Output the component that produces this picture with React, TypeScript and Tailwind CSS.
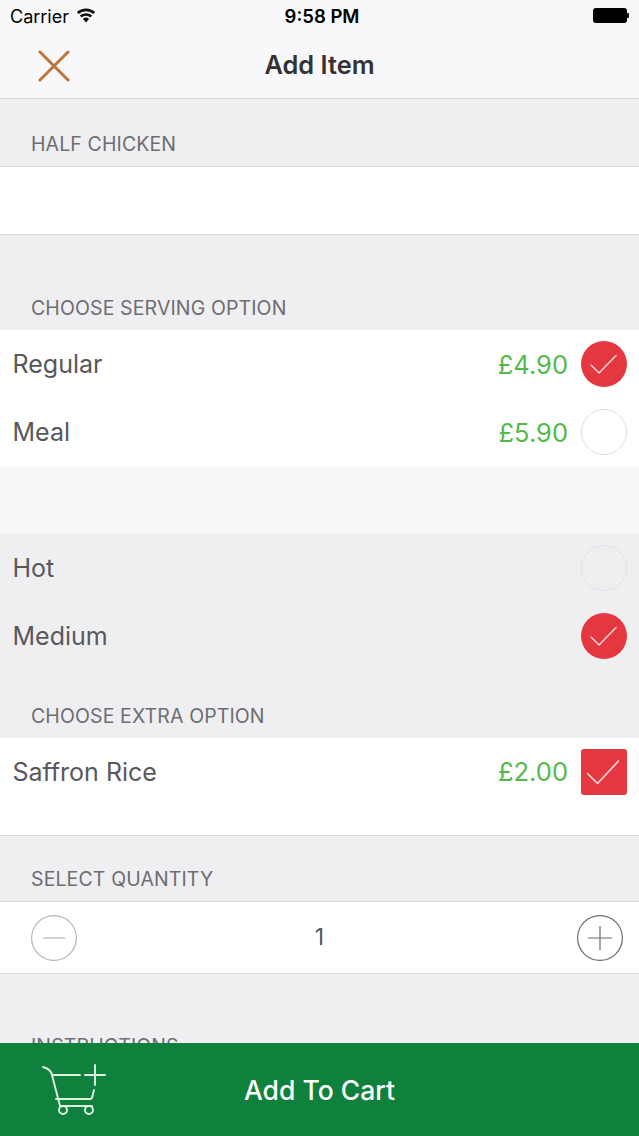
import type { ReactNode } from 'react';

function Check({ large }: { large?: boolean }) {
  return (
    <svg width="46" height="46" viewBox="0 0 46 46" fill="none" stroke="#fcdcdc" strokeWidth={large ? 1.6 : 1.4} strokeLinecap="round" strokeLinejoin="round">
      {large ? <path d="M6.500 24.500l10 10L37.500 12" /> : <path d="M10 24l8 8 17-17.500" />}
    </svg>
  );
}

function Radio({ on, dim }: { on?: boolean; dim?: boolean }) {
  if (on) {
    return (
      <div className="w-[46px] h-[46px] rounded-full bg-[#e5373f] shrink-0">
        <Check />
      </div>
    );
  }
  return <div className={`w-[46px] h-[46px] rounded-full border shrink-0 ${dim ? 'border-[#e2e2e6]' : 'border-[#dcdce0]'}`} />;
}

function Label({ children, className }: { children: ReactNode; className: string }) {
  return (
    <div className={`flex items-end pl-[31px] bg-[#efeff2] text-[#6d6d72] text-[19.5px] leading-[24px] tracking-[0.12px] ${className}`}>
      {children}
    </div>
  );
}

function Row({ name, price, control, dark }: { name: string; price?: string; control: ReactNode; dark?: boolean }) {
  return (
    <div className={`h-[68px] flex items-center pl-[12.5px] pr-[12px] ${dark ? 'bg-[#efeff2]' : 'bg-white'}`}>
      <span className="mt-[2px] text-[25px] text-[#58585c]">{name}</span>
      {price && <span className="ml-auto mt-[2px] text-[25.5px] text-[#55b94a]">{price}</span>}
      <div className={price ? 'ml-[13px]' : 'ml-auto'}>{control}</div>
    </div>
  );
}

export default function App() {
  return (
    <div className="w-[639px] h-[1136px] flex flex-col overflow-hidden bg-[#efeff2] font-['Inter',sans-serif]">
      <header className="h-[99px] shrink-0 bg-[#f8f7fa] border-b border-[#d6d6d9]">
        <div className="h-[33px] flex items-center relative px-[10px] text-black">
          <span className="text-[18px]">Carrier</span>
          <svg className="ml-[7px] mb-[2px]" width="20" height="15" viewBox="0 0 20 15" fill="#111">
            <path d="M10 14.500L6.900 10.900a4.600 4.600 0 0 1 6.200 0zM5.600 9.400L3.900 7.500a9.200 9.200 0 0 1 12.200 0l-1.700 1.900a6.700 6.700 0 0 0-8.800 0zM2.600 6L.8 4a13.800 13.800 0 0 1 18.400 0l-1.800 2a11.300 11.300 0 0 0-14.800 0z" />
          </svg>
          <span className="absolute left-0 right-0 pl-[5px] text-center text-[18.5px] font-semibold">9:58 PM</span>
          <div className="ml-auto mb-[2px] flex items-center">
            <div className="w-[34px] h-[15px] rounded-[3px] bg-black" />
            <div className="w-[2px] h-[5px] bg-[#222]" />
          </div>
        </div>
        <div className="h-[65px] flex items-center relative">
          <svg className="ml-[38px]" width="32" height="32" viewBox="0 0 32 32" stroke="#bd7339" strokeWidth="3" strokeLinecap="round">
            <path d="M2 2l28 28M30 2L2 30" />
          </svg>
          <span className="absolute left-0 right-0 text-center text-[25.4px] font-semibold text-[#333336]">Add Item</span>
        </div>
      </header>

      <main className="flex-1 min-h-0 overflow-hidden">
        <Label className="h-[68px] pb-[10px] border-b border-[#d9d9dc]">HALF CHICKEN</Label>
        <div className="h-[68px] bg-white border-b border-[#d9d9dc]" />
        <Label className="h-[95px] pb-[10px]">CHOOSE SERVING OPTION</Label>
        <Row name="Regular" price="£4.90" control={<Radio on />} />
        <Row name="Meal" price="£5.90" control={<Radio />} />
        <div className="h-[68px] bg-[#f7f7f9]" />
        <Row name="Hot" control={<Radio dim />} dark />
        <Row name="Medium" control={<Radio on />} dark />
        <Label className="h-[68px] pb-[10px]">CHOOSE EXTRA OPTION</Label>
        <div className="h-[98px] bg-white border-b border-[#d9d9dc] pt-[11px] pl-[12.5px] pr-[12px] flex items-start">
          <span className="text-[25px] text-[#58585c] leading-[46px]">Saffron Rice</span>
          <span className="ml-auto text-[25.5px] text-[#55b94a] leading-[46px]">£2.00</span>
          <div className="ml-[13px] w-[46px] h-[46px] rounded-[3px] bg-[#e5373f]">
            <Check large />
          </div>
        </div>
        <Label className="h-[66px] pb-[10px] border-b border-[#d9d9dc]">SELECT QUANTITY</Label>
        <div className="h-[72px] bg-white border-b border-[#d9d9dc] grid grid-cols-[1fr_auto_1fr] items-center text-[#58585c]">
          <div className="pl-[31px]">
            <svg width="46" height="46" viewBox="0 0 46 46" fill="none" stroke="#b9b3bb" strokeWidth="1.2">
              <circle cx="23" cy="23" r="22.400" />
              <path d="M12 23h22" />
            </svg>
          </div>
          <span className="text-[23px]">1</span>
          <div className="flex justify-end pr-[16px]">
            <svg width="46" height="46" viewBox="0 0 46 46" fill="none" stroke="#6e6a70" strokeWidth="1.2">
              <circle cx="23" cy="23" r="22.400" />
              <path d="M11 23h24M23 11v24" />
            </svg>
          </div>
        </div>
        <Label className="h-[84px]">INSTRUCTIONS</Label>
      </main>

      <footer className="h-[93px] shrink-0 bg-[#10813c] flex items-center relative">
        <svg className="ml-[42px] mt-[3px]" width="66" height="54" viewBox="0 0 66 54" fill="none" stroke="#dff3e3" strokeWidth="1.9" strokeLinecap="round" strokeLinejoin="round">
          <path d="M1 3c4 1 8 3 9 8l8 31h32" />
          <path d="M10 11h28M14 35h34c1.500 0 2-.5 2.300-2L52 26" />
          <circle cx="21" cy="46" r="4" fill="#10813c" />
          <circle cx="47" cy="46" r="4" fill="#10813c" />
          <path d="M43 11h20M53 1v20" />
        </svg>
        <span className="absolute left-0 right-0 mt-[3px] text-center text-[26.5px] font-medium text-white">Add To Cart</span>
      </footer>
    </div>
  );
}
